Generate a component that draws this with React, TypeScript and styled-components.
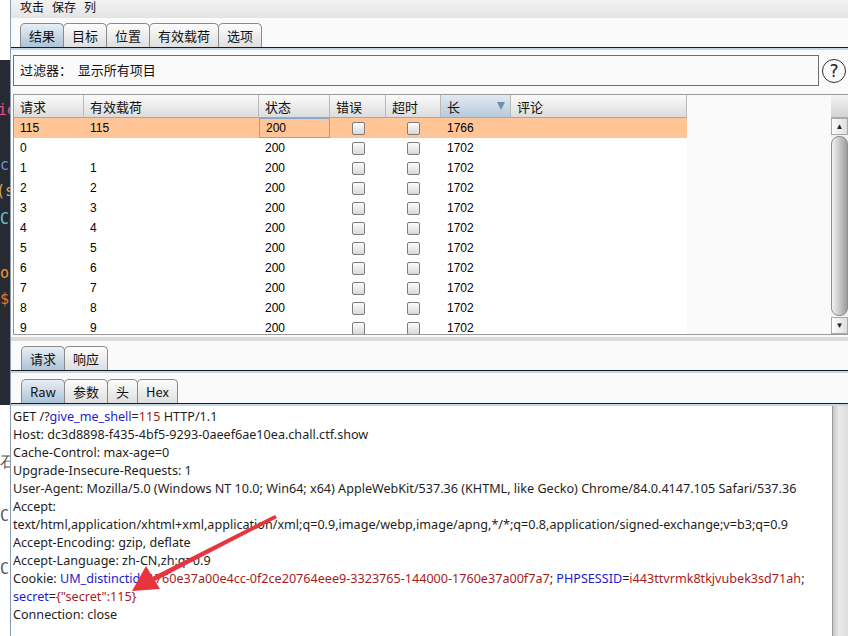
import React from 'react'
import styled, {createGlobalStyle} from 'styled-components'

const GlobalStyle = createGlobalStyle`
  html, body { margin: 0; padding: 0; }
  body {
    width: 848px;
    height: 636px;
    overflow: hidden;
    background: #fafafa;
    font-family: "Liberation Sans", "Noto Sans CJK SC", sans-serif;
  }
`

const CJK = `"Noto Sans CJK SC", "Liberation Sans", sans-serif`
const TEXT = `"Noto Sans", "Noto Sans CJK SC", sans-serif`

const Shell = styled.div`
  position: relative;
  display: flex;
  width: 848px;
  height: 636px;
  overflow: hidden;
`

// strip of the editor window behind, on the far left
const LeftStrip = styled.div`
  width: 10px;
  flex: none;
  display: flex;
  flex-direction: column;
  overflow: hidden;
`

const StripPart = styled.div<{$dark?: boolean; $h?: number}>`
  position: relative;
  height: ${p => (p.$h ? `${p.$h}px` : 'auto')};
  flex: ${p => (p.$h ? 'none' : '1')};
  background: ${p => (p.$dark ? '#272a33' : '#ffffff')};
  overflow: hidden;
`

const Glyph = styled.span<{$top: number; $color: string; $left?: number}>`
  position: absolute;
  top: ${p => p.$top}px;
  left: ${p => p.$left ?? 0}px;
  font-family: "DejaVu Sans Mono", monospace;
  font-size: 15px;
  line-height: 18px;
  white-space: nowrap;
  color: ${p => p.$color};
`

const Window = styled.div`
  flex: 1;
  min-width: 0;
  display: flex;
  flex-direction: column;
  border-left: 1px solid #8d9db0;
  background: #fafafa;
`

const MenuBar = styled.div`
  height: 18px;
  flex: none;
  display: flex;
  gap: 8px;
  padding-left: 9px;
  background: linear-gradient(#f3f3f3, #e4e4e4);
  font-family: ${CJK};
  font-size: 12px;
  line-height: 13px;
  color: #111;
`

const TabBar = styled.div<{$pad?: number; $h: number}>`
  height: ${p => p.$h}px;
  flex: none;
  display: flex;
  align-items: flex-end;
  padding-left: ${p => p.$pad ?? 9}px;
  border-bottom: 1px solid #1a1a1a;
  box-shadow: 0 2px 0 #c7d6e4;
  position: relative;
  z-index: 1;
`

const Tab = styled.div<{$active?: boolean}>`
  height: 24px;
  box-sizing: border-box;
  padding: 0 8px;
  display: flex;
  align-items: center;
  border: 1px solid #8a8a8a;
  border-bottom: none;
  border-radius: 5px 5px 0 0;
  margin-right: -1px;
  font-family: ${CJK};
  font-size: 13px;
  color: #111;
  background: ${p =>
    p.$active
      ? 'linear-gradient(#e8eff5, #abc3d8)'
      : 'linear-gradient(#fdfdfd, #dedede)'};
`

const FilterRow = styled.div`
  display: flex;
  align-items: center;
  gap: 3px;
  margin: 7px 0 0 2px;
  height: 31px;
  flex: none;
`

const FilterBox = styled.div`
  width: 806px;
  height: 31px;
  box-sizing: border-box;
  border: 1px solid #6e6e6e;
  background: #fafafa;
  display: flex;
  align-items: center;
  padding: 0 0 2px 6px;
  font-family: ${CJK};
  font-size: 13px;
  color: #111;
  white-space: pre;
`

const HelpIcon = styled.div`
  width: 24px;
  height: 24px;
  box-sizing: border-box;
  flex: none;
  border: 1.5px solid #333;
  border-radius: 50%;
  display: flex;
  align-items: center;
  justify-content: center;
  font-family: "DejaVu Sans", sans-serif;
  font-size: 17px;
  color: #222;
`

const TableFrame = styled.div`
  margin: 8px 0 0 2px;
  height: 239px;
  flex: none;
  display: flex;
  border: 1px solid #9a9a9a;
  border-right: none;
  background: #fafafa;
  overflow: hidden;
`

const TableBody = styled.div`
  flex: 1;
  min-width: 0;
  display: flex;
  flex-direction: column;
`

const cols = [70, 175, 71, 56, 55, 70, 176]

const Row = styled.div<{$head?: boolean; $selected?: boolean}>`
  display: grid;
  grid-template-columns: ${cols.map(c => `${c}px`).join(' ')};
  height: ${p => (p.$head ? 23 : 20)}px;
  flex: none;
  width: max-content;
  background: ${p => (p.$head ? 'transparent' : p.$selected ? '#ffc596' : '#ffffff')};
`

const HeadCell = styled.div<{$sorted?: boolean}>`
  position: relative;
  box-sizing: border-box;
  display: flex;
  align-items: center;
  padding-left: 6px;
  border-right: 1px solid #b9b9b9;
  border-bottom: 1px solid #a7a7a7;
  font-family: ${CJK};
  font-size: 13px;
  color: #111;
  background: ${p =>
    p.$sorted ? 'linear-gradient(#e2eaf2, #b6cadb)' : 'linear-gradient(#fbfbfb, #dcdcdc)'};
`

const SortMark = styled.span`
  position: absolute;
  right: 5px;
  top: 7px;
  width: 0;
  height: 0;
  border-left: 4px solid transparent;
  border-right: 4px solid transparent;
  border-top: 8px solid #6f8fae;
`

const Cell = styled.div<{$focus?: boolean; $center?: boolean}>`
  box-sizing: border-box;
  display: flex;
  align-items: center;
  justify-content: ${p => (p.$center ? 'center' : 'flex-start')};
  padding-left: ${p => (p.$center ? 0 : 6)}px;
  font-size: 12px;
  color: #000;
  border: ${p => (p.$focus ? '1px solid #86a6cd' : 'none')};
`

const Check = styled.span`
  width: 13px;
  height: 13px;
  box-sizing: border-box;
  border: 1px solid #7c7c7c;
  border-radius: 2px;
  background: linear-gradient(#fcfcfc, #d9d9d9);
`

const VScroll = styled.div`
  width: 17px;
  flex: none;
  display: flex;
  flex-direction: column;
  background: #f0f0f0;
`

const ScrollCorner = styled.div`
  height: 23px;
  flex: none;
  background: linear-gradient(#f4f4f4, #d3d3d3);
  border-bottom: 1px solid #aaa;
  box-sizing: border-box;
`

const ArrowBtn = styled.div`
  height: 17px;
  flex: none;
  box-sizing: border-box;
  border: 1px solid #a9a9a9;
  background: linear-gradient(90deg, #fdfdfd, #dedede);
  display: flex;
  align-items: center;
  justify-content: center;
  font-size: 8px;
  color: #222;
`

const Thumb = styled.div`
  flex: 1;
  margin: 1px 0;
  border: 1px solid #8f8f8f;
  border-radius: 8px;
  background: linear-gradient(90deg, #f2f2f2, #c4c4c4 55%, #9c9c9c);
`

const SplitBar = styled.div`
  height: 9px;
  flex: none;
  display: flex;
  align-items: center;
  &::after {
    content: '';
    display: block;
    width: 100%;
    height: 4px;
    margin-top: -1px;
    background: #dadada;
  }
`

const LowerTabs = styled.div`
  display: flex;
  flex-direction: column;
  gap: 4px;
  flex: none;
`

const Editor = styled.div`
  flex: 1;
  min-height: 0;
  margin-top: 2px;
  display: flex;
  background: #ffffff;
`

const EditorText = styled.div`
  flex: 1;
  padding: 2px 0 0 2px;
  font-family: ${TEXT};
  font-size: 12.6px;
  line-height: 18px;
  color: #1e1e1e;
  white-space: pre;
  overflow: hidden;
`

const EditorScroll = styled.div`
  width: 15px;
  flex: none;
  border-left: 1px solid #9a9a9a;
  background: linear-gradient(90deg, #c6c6c6, #eaeaea 40%, #dedede);
`

const Key = styled.span`
  color: #1c1ccc;
`

const Val = styled.span`
  color: #a51d1d;
`

const Arrow = styled.svg`
  position: absolute;
  left: 0;
  top: 0;
  pointer-events: none;
`

type Row = {req: string; payload: string; len: string; selected?: boolean}

const rows: Row[] = [
  {req: '115', payload: '115', len: '1766', selected: true},
  {req: '0', payload: '', len: '1702'},
  ...Array.from({length: 9}, (_, i) => ({req: String(i + 1), payload: String(i + 1), len: '1702'})),
]

const heads = ['请求', '有效载荷', '状态', '错误', '超时', '长', '评论']

export default function App() {
  return (
    <Shell>
      <GlobalStyle />
      <LeftStrip>
        <StripPart $h={60} />
        <StripPart $dark $h={345}>
          <Glyph $top={41} $color="#e8508a" $left={-2}>ie</Glyph>
          <Glyph $top={96} $color="#6f93c9">c</Glyph>
          <Glyph $top={122} $color="#d6b15a" $left={-4}>(s</Glyph>
          <Glyph $top={150} $color="#6fc6d8">Co</Glyph>
          <Glyph $top={204} $color="#f09a2c">ob</Glyph>
          <Glyph $top={230} $color="#e8702c">$c</Glyph>
        </StripPart>
        <StripPart>
          <Glyph $top={48} $color="#555">石</Glyph>
          <Glyph $top={102} $color="#555">C</Glyph>
          <Glyph $top={155} $color="#555">C</Glyph>
        </StripPart>
      </LeftStrip>

      <Window>
        <MenuBar>
          <span>攻击</span>
          <span>保存</span>
          <span>列</span>
        </MenuBar>

        <TabBar $h={29}>
          <Tab $active>结果</Tab>
          <Tab>目标</Tab>
          <Tab>位置</Tab>
          <Tab>有效载荷</Tab>
          <Tab>选项</Tab>
        </TabBar>

        <FilterRow>
          <FilterBox>{'过滤器：  显示所有项目'}</FilterBox>
          <HelpIcon>?</HelpIcon>
        </FilterRow>

        <TableFrame>
          <TableBody>
            <Row $head>
              {heads.map(h => (
                <HeadCell key={h} $sorted={h === '长'}>
                  {h}
                  {h === '长' && <SortMark />}
                </HeadCell>
              ))}
            </Row>
            {rows.map(r => (
              <Row key={r.req} $selected={r.selected}>
                <Cell>{r.req}</Cell>
                <Cell>{r.payload}</Cell>
                <Cell $focus={r.selected}>200</Cell>
                <Cell $center>
                  <Check />
                </Cell>
                <Cell $center>
                  <Check />
                </Cell>
                <Cell>{r.len}</Cell>
                <Cell />
              </Row>
            ))}
          </TableBody>
          <VScroll>
            <ScrollCorner />
            <ArrowBtn>▲</ArrowBtn>
            <Thumb />
            <ArrowBtn>▼</ArrowBtn>
          </VScroll>
        </TableFrame>

        <SplitBar />

        <LowerTabs>
          <TabBar $h={26} $pad={10}>
            <Tab $active>请求</Tab>
            <Tab>响应</Tab>
          </TabBar>
          <TabBar $h={28} $pad={10}>
            <Tab $active>Raw</Tab>
            <Tab>参数</Tab>
            <Tab>头</Tab>
            <Tab>Hex</Tab>
          </TabBar>
        </LowerTabs>

        <Editor>
          <EditorText>
            <div>
              GET /?<Key>give_me_shell</Key>=<Val>115</Val> HTTP/1.1
            </div>
            <div>Host: dc3d8898-f435-4bf5-9293-0aeef6ae10ea.chall.ctf.show</div>
            <div>Cache-Control: max-age=0</div>
            <div>Upgrade-Insecure-Requests: 1</div>
            <div>
              User-Agent: Mozilla/5.0 (Windows NT 10.0; Win64; x64) AppleWebKit/537.36 (KHTML, like Gecko) Chrome/84.0.4147.105 Safari/537.36
            </div>
            <div>Accept: </div>
            <div>
              text/html,application/xhtml+xml,application/xml;q=0.9,image/webp,image/apng,*/*;q=0.8,application/signed-exchange;v=b3;q=0.9
            </div>
            <div>Accept-Encoding: gzip, deflate</div>
            <div>Accept-Language: zh-CN,zh;q=0.9</div>
            <div>
              Cookie: <Key>UM_distinctid</Key>=<Val>1760e37a00e4cc-0f2ce20764eee9-3323765-144000-1760e37a00f7a7</Val>;{' '}
              <Key>PHPSESSID</Key>=<Val>i443ttvrmk8tkjvubek3sd71ah</Val>;
            </div>
            <div>
              <Key>secret</Key>=<Val>{'{"secret":115}'}</Val>
            </div>
            <div>Connection: close</div>
          </EditorText>
          <EditorScroll />
        </Editor>
      </Window>

      <Arrow width={848} height={636} viewBox="0 0 848 636">
        <polygon points="275,515 277,518 155,581 152,577" fill="#e8343c" />
        <polygon points="132,591 146,566 160,589" fill="#e8343c" />
      </Arrow>
    </Shell>
  )
}
